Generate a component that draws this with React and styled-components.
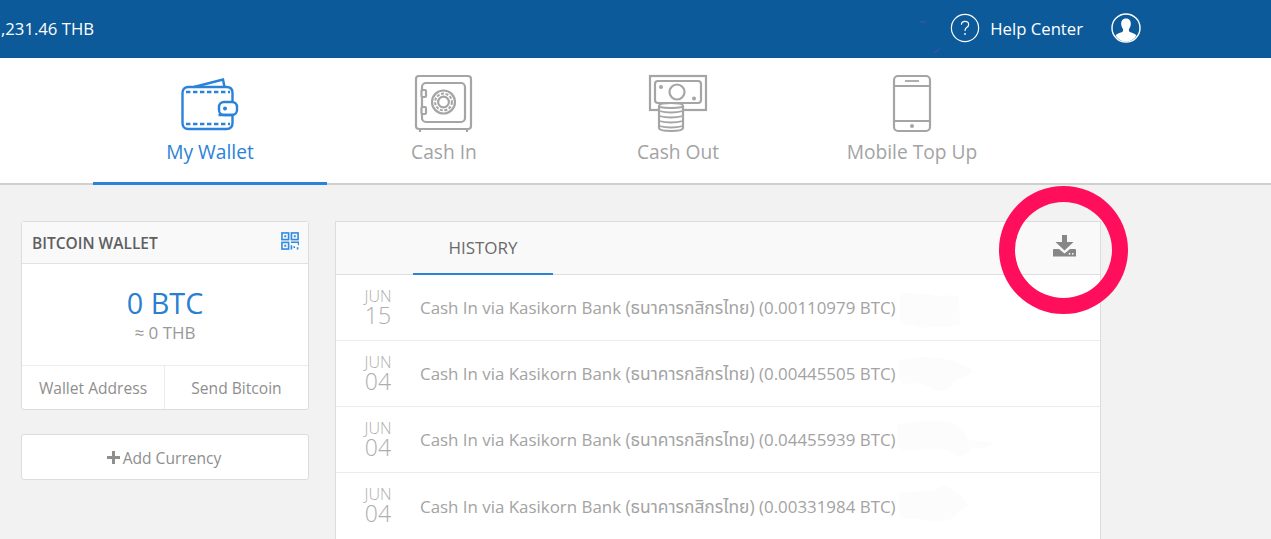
import React from 'react';
import styled, { createGlobalStyle } from 'styled-components';

const Global = createGlobalStyle`
  html, body {
    margin: 0;
    height: 539px;
    overflow: hidden;
    background: #f2f2f2;
    font-family: "Open Sans", "Noto Sans", "Noto Sans Thai", "DejaVu Sans", sans-serif;
  }
  * { box-sizing: border-box; }
`

const TopBar = styled.header`
  height: 58px;
  background: #0c5a9a;
  color: #fff;
  display: flex;
  align-items: center;
  justify-content: space-between;
  position: relative;
  padding: 0 130px 2px 1px;
  font-size: 16.7px;
`
const Specks = styled.svg`
  position: absolute;
  left: 915px;
  top: 15px;
`
const TopRight = styled.div`
  display: flex;
  align-items: center;
`
const HelpLink = styled.div`
  display: flex;
  align-items: center;
  gap: 10px;
  margin-right: 28px;
`
const Nav = styled.nav`
  height: 127px;
  background: #fff;
  border-bottom: 2px solid #cfcfcf;
  display: flex;
  padding-left: 93px;
`
const Tab = styled.div`
  width: 234px;
  height: 127px;
  padding-top: 16px;
  display: flex;
  flex-direction: column;
  align-items: center;
  gap: 5px;
  font-size: 19.2px;
  line-height: 26px;
  color: ${p => (p.$active ? '#2a82d9' : '#a3a3a3')};
  border-bottom: 3px solid ${p => (p.$active ? '#2a82d9' : 'transparent')};
`
const Content = styled.main`
  display: flex;
  align-items: flex-start;
  padding: 36px 0 0 21px;
  gap: 26px;
  position: relative;
`
const Side = styled.aside`
  width: 288px;
  display: flex;
  flex-direction: column;
  gap: 24px;
`
const Card = styled.section`
  background: #fff;
  border: 1px solid #dcdcdc;
  border-radius: 3px;
`
const CardHead = styled.div`
  height: 42px;
  background: #f9f9f9;
  border-bottom: 1px solid #e2e2e2;
  display: flex;
  align-items: center;
  justify-content: space-between;
  padding: 0 9px 0 10px;
  font-size: 15.5px;
  font-weight: 600;
  color: #5f5f5f;
`
const QrWrap = styled.div`
  display: flex;
  margin-bottom: 3px;
`
const Balance = styled.div`
  height: 102px;
  border-bottom: 1px solid #ececec;
  display: flex;
  flex-direction: column;
  align-items: center;
  padding-top: 20px;
`
const Amount = styled.div`
  font-size: 28.8px;
  line-height: 38px;
  color: #2a7fd2;
`
const Approx = styled.div`
  font-size: 17px;
  line-height: 22px;
  color: #999;
`
const Actions = styled.div`
  height: 43px;
  display: grid;
  grid-template-columns: 142px 1fr;
`
const Action = styled.div`
  display: flex;
  align-items: center;
  justify-content: center;
  font-size: 15.6px;
  color: #8e8e8e;
  & + & { border-left: 1px solid #ececec; }
`
const AddButton = styled(Card)`
  height: 46px;
  display: flex;
  align-items: center;
  justify-content: center;
  gap: 3px;
  padding: 1px 2px 0 0;
  font-size: 15.6px;
  color: #8e8e8e;
`
const Panel = styled.section`
  width: 766px;
  background: #fff;
  border: 1px solid #dcdcdc;
  border-bottom: none;
`
const PanelHead = styled.div`
  height: 53px;
  background: #f9f9f9;
  border-bottom: 1px solid #dedede;
  display: flex;
  justify-content: space-between;
  padding: 0 24px 0 77px;
`
const HistoryTab = styled.div`
  width: 140px;
  height: 53px;
  display: flex;
  align-items: center;
  justify-content: center;
  font-size: 17px;
  color: #6a6a6a;
  border-bottom: 2px solid #2a82d9;
`
const DownloadBox = styled.div`
  display: flex;
  align-items: center;
  padding-bottom: 4px;
`
const Row = styled.div`
  height: 66px;
  display: flex;
  align-items: center;
  position: relative;
  border-bottom: 1px solid #ececec;
  &:last-child { border-bottom: none; }
`
const DateCell = styled.div`
  width: 84px;
  display: flex;
  flex-direction: column;
  align-items: center;
  color: #aeaeae;
  font-weight: 300;
`
const Month = styled.div`
  font-size: 16px;
  line-height: 15px;
  margin-top: -1px;
`
const Day = styled.div`
  font-size: 23px;
  line-height: 22px;
`
const RowText = styled.div`
  font-size: 16.9px;
  line-height: 24px;
  color: #a3a3a3;
  white-space: nowrap;
`
const ThaiName = styled.span`
  font-size: 17.4px;
`
const Smudge = styled.svg`
  position: absolute;
  left: 560px;
  top: 0;
`
const Ring = styled.div`
  position: absolute;
  left: 999px;
  top: 1px;
  width: 129px;
  height: 128px;
  border: 16px solid #ff0f5b;
  border-radius: 50%;
`

const WalletIcon = () => (
  <svg width="60" height="60" viewBox="0 0 60 60" fill="none" stroke="#2a82d9" strokeWidth="2.4">
    <path d="M14 13 L43 5.5 L44.5 13" />
    <path d="M38.5 41 H52.5 V49 Q52.5 55 46.5 55 H8.5 Q2.5 55 2.5 49 V19 Q2.5 13 8.5 13 H46.5 Q52.5 13 52.5 19 V28" />
    <rect x="39" y="28" width="18" height="13" rx="5" />
    <circle cx="45" cy="34.5" r="2" fill="#2a82d9" stroke="none" />
    <path d="M6 18 H50 M6 50 H50" strokeDasharray="4.4 2.6" />
  </svg>
)

const SafeIcon = () => (
  <svg width="60" height="60" viewBox="0 0 60 60" fill="none" stroke="#a5a5a5" strokeWidth="2.2">
    <rect x="2" y="2" width="55" height="53" rx="3" />
    <rect x="8" y="9" width="43" height="39" rx="4" />
    <circle cx="29.5" cy="28" r="11.5" />
    <circle cx="29.5" cy="28" r="5.4" />
    <circle cx="29.5" cy="28" r="8.4" strokeDasharray="3 1.6" strokeWidth="2" />
    <rect x="7.5" y="16" width="4.5" height="7" rx="1" fill="#fff" />
    <rect x="7.5" y="33" width="4.5" height="7" rx="1" fill="#fff" />
    <path d="M6 55 V58 M53 55 V58" />
  </svg>
)

const CashOutIcon = () => (
  <svg width="60" height="60" viewBox="0 0 60 60" fill="none" stroke="#a5a5a5" strokeWidth="2.2">
    <rect x="2" y="2" width="56" height="34" />
    <rect x="7" y="7" width="46" height="22" rx="3" />
    <circle cx="29" cy="18" r="7.5" />
    <circle cx="13" cy="13" r="2" fill="#a5a5a5" stroke="none" />
    <circle cx="46" cy="24.5" r="2" fill="#a5a5a5" stroke="none" />
    <path d="M11 32 Q11 29 23 29 Q35 29 35 32 V54 Q35 57 23 57 Q11 57 11 54 Z" fill="#fff" />
    <path d="M11 37 Q23 40 35 37 M11 42 Q23 45 35 42 M11 47 Q23 50 35 47 M11 52 Q23 55 35 52 M11 33 Q23 35 35 33" strokeWidth="1.8" />
  </svg>
)

const PhoneIcon = () => (
  <svg width="60" height="60" viewBox="0 0 60 60" fill="none" stroke="#a5a5a5" strokeWidth="2.2">
    <rect x="12" y="2" width="36" height="55" rx="4" />
    <path d="M12 12 H48 M12 47 H48" />
    <path d="M23 7 H37" strokeWidth="1.8" />
    <circle cx="30" cy="52" r="2" fill="#a5a5a5" stroke="none" />
  </svg>
)

const HelpIcon = () => (
  <svg width="30" height="30" viewBox="0 0 30 30" fill="none" stroke="#fff" strokeWidth="1.2">
    <circle cx="15" cy="15" r="13.6" />
    <path d="M11.4 11.6 Q11.6 8.4 15 8.4 Q18.6 8.4 18.6 11.4 Q18.6 13.4 16.6 14.6 Q15 15.6 15 18" />
    <circle cx="15" cy="21" r="0.9" fill="#fff" stroke="none" />
  </svg>
)

const UserIcon = () => (
  <svg width="30" height="30" viewBox="0 0 30 30">
    <circle cx="15" cy="15" r="14" fill="none" stroke="#fff" strokeWidth="1.4" />
    <path d="M15 5.5 C11.4 5.5 10 8.2 10.2 11 C10.3 13 11 14.6 12 16 C12.4 17.6 12 18.6 10.6 19.3 C8.6 20.2 5.8 20.6 4.6 22.4 C7 26.4 10.8 28.4 15 28.4 C19.2 28.4 23 26.4 25.4 22.4 C24.2 20.6 21.4 20.2 19.4 19.3 C18 18.6 17.6 17.6 18 16 C19 14.6 19.7 13 19.8 11 C20 8.2 18.6 5.5 15 5.5 Z" fill="#fff" />
  </svg>
)

const QrIcon = () => (
  <svg width="18" height="18" viewBox="0 0 19 19" fill="none" stroke="#2f8ae0" strokeWidth="1.7">
    <rect x="1" y="1" width="7" height="7" />
    <rect x="11" y="1" width="7" height="7" />
    <rect x="1" y="11" width="7" height="7" />
    <path d="M3.5 3.5 h2 v2 h-2z M13.5 3.5 h2 v2 h-2z M3.5 13.5 h2 v2 h-2z" fill="#2f8ae0" stroke="none" />
    <path d="M10.5 10.8 H18.6 V14 M11 14 V18.6 M14 15 V17 M17.5 16 V18.6" />
  </svg>
)

const DownloadIcon = () => (
  <svg width="23" height="22" viewBox="0 0 23 22">
    <path d="M9 0 H14 V7 H20.5 L11.5 15.5 L2.5 7 H9 Z" fill="#878787" />
    <path d="M1 14 H6 L11.5 18.5 L17 14 H22 Q23 14 23 15 V21.5 H0 V15 Q0 14 1 14 Z" fill="#878787" />
    <circle cx="16.5" cy="18.8" r="0.9" fill="#fff" />
    <circle cx="19.8" cy="18.8" r="0.9" fill="#fff" />
  </svg>
)

const blobs = [
  'M4 20 Q10 16 22 19 Q34 18 40 21 Q52 19 63 22 L64 50 Q50 53 38 52 Q26 54 18 50 Q6 52 4 46 Z',
  'M3 20 Q20 14 44 17 Q62 20 76 28 Q78 34 60 38 Q52 52 40 50 Q28 42 16 42 Q4 46 3 36 Z',
  'M1 18 Q20 12 52 14 Q62 16 72 32 Q90 36 98 34 Q90 44 76 40 Q70 52 58 48 Q52 40 30 42 Q6 48 1 38 Z',
  'M3 20 Q20 18 38 18 Q46 8 58 18 Q70 26 72 32 Q62 38 56 46 Q40 50 20 46 Q4 48 3 36 Z',
]

const rows = [
  { day: '15', amount: '0.00110979' },
  { day: '04', amount: '0.00445505' },
  { day: '04', amount: '0.04455939' },
  { day: '04', amount: '0.00331984' },
]

export default function App() {
  return (
    <>
      <Global />
      <TopBar>
        <span>,231.46 THB</span>
        <Specks width="30" height="40" viewBox="0 0 30 40">
          <ellipse cx="8" cy="7" rx="3" ry="1.4" fill="#2c55a6" />
          <path d="M17 37 Q23 35 26 31 Q25 36 20 38 Z" fill="#2c55a6" />
        </Specks>
        <TopRight>
          <HelpLink><HelpIcon />Help Center</HelpLink>
          <UserIcon />
        </TopRight>
      </TopBar>
      <Nav>
        <Tab $active><WalletIcon />My Wallet</Tab>
        <Tab><SafeIcon />Cash In</Tab>
        <Tab><CashOutIcon />Cash Out</Tab>
        <Tab><PhoneIcon />Mobile Top Up</Tab>
      </Nav>
      <Content>
        <Side>
          <Card>
            <CardHead>BITCOIN WALLET <QrWrap><QrIcon /></QrWrap></CardHead>
            <Balance>
              <Amount>0 BTC</Amount>
              <Approx>≈ 0 THB</Approx>
            </Balance>
            <Actions>
              <Action>Wallet Address</Action>
              <Action>Send Bitcoin</Action>
            </Actions>
          </Card>
          <AddButton>
            <svg width="13" height="13" viewBox="0 0 13 13"><path d="M5 0 H8 V5 H13 V8 H8 V13 H5 V8 H0 V5 H5 Z" fill="#8e8e8e" /></svg>
            Add Currency
          </AddButton>
        </Side>
        <Panel>
          <PanelHead>
            <HistoryTab>HISTORY</HistoryTab>
            <DownloadBox><DownloadIcon /></DownloadBox>
          </PanelHead>
          {rows.map((r, i) => (
            <Row key={i}>
              <DateCell>
                <Month>JUN</Month>
                <Day>{r.day}</Day>
              </DateCell>
              <RowText>Cash In via Kasikorn Bank <ThaiName>(ธนาคารกสิกรไทย)</ThaiName> ({r.amount} BTC)</RowText>
              <Smudge width="100" height="66" viewBox="0 0 100 66">
                <path d={blobs[i]} fill="#fcfcfc" />
              </Smudge>
            </Row>
          ))}
        </Panel>
        <Ring />
      </Content>
    </>
  );
}
